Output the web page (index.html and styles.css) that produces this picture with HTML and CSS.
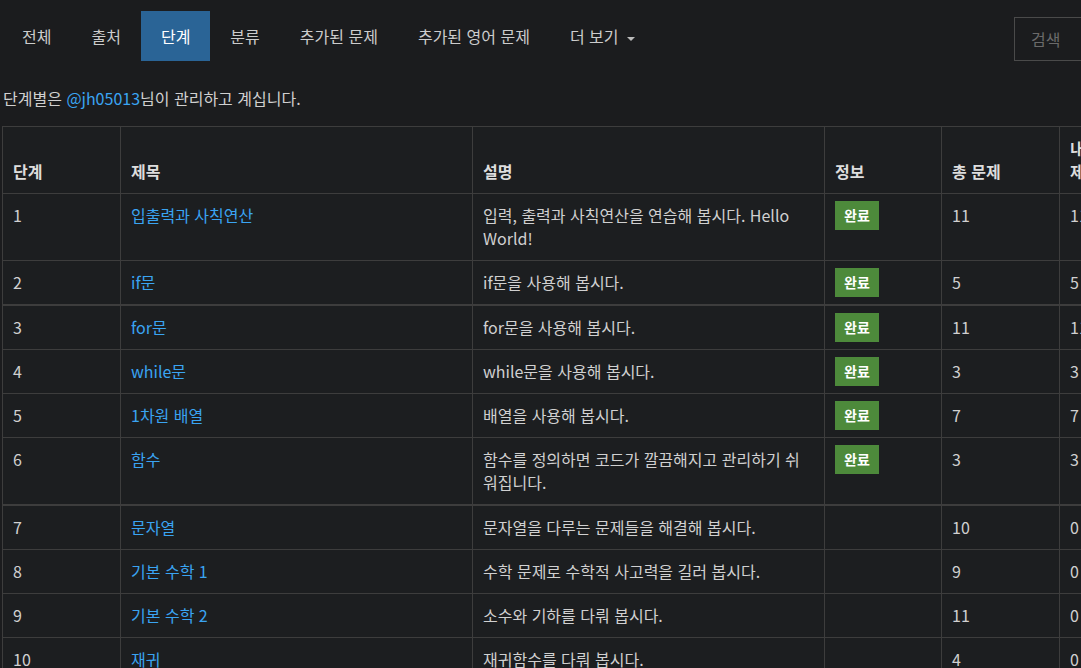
FILE: index.html
```html
<!DOCTYPE html>
<html lang="ko">
<head>
  <meta charset="UTF-8" />
  <meta name="viewport" content="width=device-width, initial-scale=1.0" />
  <title>단계별로 풀어보기</title>
  <link rel="stylesheet" href="styles.css">
</head>
<body>
  <div class="page">
    <div class="topbar">
      <ul class="tabs">
        <li><a href="#">전체</a></li>
        <li><a href="#">출처</a></li>
        <li class="active"><a href="#">단계</a></li>
        <li><a href="#">분류</a></li>
        <li><a href="#">추가된 문제</a></li>
        <li><a href="#">추가된 영어 문제</a></li>
        <li><a href="#">더 보기 <span class="caret"></span></a></li>
      </ul>
      <input class="search" type="text" placeholder="검색">
    </div>

    <p class="intro">단계별은 <a href="#">@jh05013</a>님이 관리하고 계십니다.</p>

    <table class="steps">
      <colgroup>
        <col class="c-num">
        <col class="c-title">
        <col class="c-desc">
        <col class="c-info">
        <col class="c-total">
        <col class="c-mine">
        <col class="c-rest">
      </colgroup>
      <thead>
        <tr>
          <th>단계</th>
          <th>제목</th>
          <th>설명</th>
          <th>정보</th>
          <th>총 문제</th>
          <th>내 제출</th>
          <th>정답 비율</th>
        </tr>
      </thead>
      <tbody>
        <tr>
          <td>1</td>
          <td><a href="#">입출력과 사칙연산</a></td>
          <td>입력, 출력과 사칙연산을 연습해 봅시다. Hello World!</td>
          <td><span class="done">완료</span></td>
          <td>11</td>
          <td>11</td>
          <td></td>
        </tr>
        <tr>
          <td>2</td>
          <td><a href="#">if문</a></td>
          <td>if문을 사용해 봅시다.</td>
          <td><span class="done">완료</span></td>
          <td>5</td>
          <td>5</td>
          <td></td>
        </tr>
      </tbody>
      <tbody>
        <tr>
          <td>3</td>
          <td><a href="#">for문</a></td>
          <td>for문을 사용해 봅시다.</td>
          <td><span class="done">완료</span></td>
          <td>11</td>
          <td>11</td>
          <td></td>
        </tr>
        <tr>
          <td>4</td>
          <td><a href="#">while문</a></td>
          <td>while문을 사용해 봅시다.</td>
          <td><span class="done">완료</span></td>
          <td>3</td>
          <td>3</td>
          <td></td>
        </tr>
        <tr>
          <td>5</td>
          <td><a href="#">1차원 배열</a></td>
          <td>배열을 사용해 봅시다.</td>
          <td><span class="done">완료</span></td>
          <td>7</td>
          <td>7</td>
          <td></td>
        </tr>
        <tr>
          <td>6</td>
          <td><a href="#">함수</a></td>
          <td>함수를 정의하면 코드가 깔끔해지고 관리하기 쉬워집니다.</td>
          <td><span class="done">완료</span></td>
          <td>3</td>
          <td>3</td>
          <td></td>
        </tr>
      </tbody>
      <tbody>
        <tr>
          <td>7</td>
          <td><a href="#">문자열</a></td>
          <td>문자열을 다루는 문제들을 해결해 봅시다.</td>
          <td></td>
          <td>10</td>
          <td>0</td>
          <td></td>
        </tr>
        <tr>
          <td>8</td>
          <td><a href="#">기본 수학 1</a></td>
          <td>수학 문제로 수학적 사고력을 길러 봅시다.</td>
          <td></td>
          <td>9</td>
          <td>0</td>
          <td></td>
        </tr>
        <tr>
          <td>9</td>
          <td><a href="#">기본 수학 2</a></td>
          <td>소수와 기하를 다뤄 봅시다.</td>
          <td></td>
          <td>11</td>
          <td>0</td>
          <td></td>
        </tr>
        <tr>
          <td>10</td>
          <td><a href="#">재귀</a></td>
          <td>재귀함수를 다뤄 봅시다.</td>
          <td></td>
          <td>4</td>
          <td>0</td>
          <td></td>
        </tr>
      </tbody>
    </table>
  </div>
</body>
</html>
```

FILE: styles.css
```css
html, body {
  margin: 0;
  padding: 0;
  overflow: hidden;
}

body {
  font-family: "Noto Sans CJK KR", "Noto Sans", sans-serif;
  font-size: 16px;
  line-height: 23px;
  background: #1b1c1e;
  color: #d0d0d0;
}

a {
  color: #3aa4f2;
  text-decoration: none;
}

.page {
  padding: 0 2px;
}

.topbar {
  display: flex;
  align-items: flex-start;
  width: 1170px;
  height: 72px;
  padding-top: 11px;
  box-sizing: border-box;
}

.tabs {
  display: flex;
  list-style: none;
  margin: 0;
  padding: 0;
}

.tabs a {
  display: block;
  padding: 0 20px;
  height: 50px;
  line-height: 50px;
  color: #cccccc;
}

.tabs li.active a {
  background: #2a6496;
  color: #ffffff;
}

.caret {
  display: inline-block;
  width: 0;
  height: 0;
  margin-left: 4px;
  vertical-align: middle;
  border-top: 4px solid #bbbbbb;
  border-left: 4px solid transparent;
  border-right: 4px solid transparent;
}

.search {
  margin: 6px 0 0 auto;
  width: 158px;
  height: 44px;
  box-sizing: border-box;
  padding: 0 16px;
  background: transparent;
  border: 1px solid #4a4a4a;
  font-family: inherit;
  font-size: 16px;
  color: #cccccc;
  flex-shrink: 0;
}

.search::placeholder {
  color: #6a6a6a;
}

.intro {
  margin: 15px 0 16px 1px;
}

.steps {
  table-layout: fixed;
  border-collapse: collapse;
  width: 1300px;
  background: #1c1e20;
}

.c-num { width: 118px; }
.c-title { width: 352px; }
.c-desc { width: 352px; }
.c-info { width: 117px; }
.c-total { width: 118px; }
.c-mine { width: 60px; }
.c-rest { width: 183px; }

.steps th,
.steps td {
  border: 1px solid #3d3d3d;
  padding: 10px;
  text-align: left;
  vertical-align: top;
}

.steps th {
  vertical-align: bottom;
  font-weight: bold;
  color: #dddddd;
  word-break: keep-all;
}

.steps tbody + tbody {
  border-top: 2px solid #3d3d3d;
}

.done {
  display: inline-block;
  vertical-align: top;
  margin: -3px 0;
  padding: 5px 9px;
  line-height: 19px;
  font-size: 14px;
  font-weight: bold;
  color: #ffffff;
  background: #4d8a3b;
}
```
